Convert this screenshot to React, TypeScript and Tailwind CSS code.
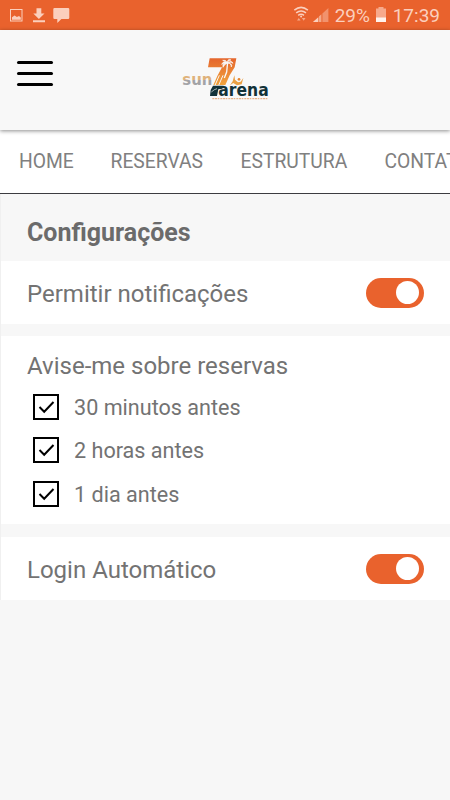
import type { ReactNode } from "react";
import clsx from "clsx";

const TABS = [
  { label: "HOME", className: "w-[91.5px]" },
  { label: "RESERVAS", className: "w-[130px]" },
  { label: "ESTRUTURA", className: "w-[144px]" },
  { label: "CONTATO", className: "w-[110px]" },
];

const REMINDERS = ["30 minutos antes", "2 horas antes", "1 dia antes"];

function StatusBar() {
  return (
    <div className="flex h-[30px] shrink-0 items-center justify-between bg-[#e9622d] pl-[9px] pr-[10px] text-[#fbcfbd]">
      <svg className="h-[30px] w-[62px]" viewBox="9 0 62 30" fill="none">
        <rect x="10.5" y="9.5" width="11.5" height="11.5" stroke="currentColor" strokeWidth="1" />
        <path d="M12 19.700v-2.400l2.600-1.900 2.300 1.600 2.100-1 1.800 1.500v2.200z" fill="currentColor" />
        <path d="M36.500 8.300h4.800v5.200h3.200l-5.600 5.400-5.600-5.400h3.200zM33 20.300h12v1.900H33z" fill="currentColor" />
        <path d="M54.500 8h13.600q1.200 0 1.200 1.200v8.600q0 1.300-1.200 1.300h-6.700L57.300 23v-3.900h-2.800q-1.200 0-1.200-1.300V9.200q0-1.200 1.200-1.200z" fill="currentColor" />
      </svg>
      <div className="flex h-[30px] items-center font-['Roboto',sans-serif] text-[19px]">
        <svg className="h-[30px] w-[42px]" viewBox="293 0 42 30" fill="none">
          <path d="M294.300 10.200q6.800-5.600 13.600 0M296.200 12.900q4.900-3.900 9.800 0M298.200 15.300q2.900-2.200 5.800 0" stroke="currentColor" strokeWidth="1.500" />
          <circle cx="301.100" cy="16.500" r="1" fill="currentColor" />
          <path d="M297 20.500l1.800-2.600 1.800 2.600zM301.900 18.100h3.600l-1.800 2.600z" fill="currentColor" opacity=".65" />
          <path d="M328.400 8v14h-6V13.400z" fill="currentColor" opacity=".45" />
          <path d="M321.400 14.300V22h-2.500v-5.400z" fill="currentColor" opacity=".65" />
          <path d="M318.300 17.200V22h-5.400z" fill="currentColor" />
        </svg>
        <span className="w-[41px] pt-0.5">29%</span>
        <svg className="h-[30px] w-[10px]" viewBox="0 0 10 30">
          <path d="M2.500 7h5v1.600H10V22H0V8.600h2.500z" fill="#f7a98b" />
          <path d="M0 17.500h10V22H0z" fill="#fff3ed" />
        </svg>
        <span className="ml-[7px] pt-0.5">17:39</span>
      </div>
    </div>
  );
}

function Logo() {
  return (
    <svg className="h-[56px] w-[100px]" viewBox="0 0 300 168" role="img" aria-label="Sun7 Arena">
      <defs>
        <linearGradient id="seven" x1="0" y1="0" x2="0" y2="1">
          <stop offset="0" stopColor="#e5662d" />
          <stop offset="1" stopColor="#f1a33c" />
        </linearGradient>
        <linearGradient id="sun" gradientUnits="userSpaceOnUse" x1="0" y1="77" x2="0" y2="106">
          <stop offset=".42" stopColor="#dfb27c" />
          <stop offset=".42" stopColor="#a3a3a6" />
        </linearGradient>
      </defs>
      <text x="22" y="105" textLength="90" lengthAdjust="spacingAndGlyphs" fill="url(#sun)" className="font-['DejaVu_Sans',sans-serif] text-[48px] font-bold">
        sun
      </text>
      <path d="M104 25h80l-5 27-15 24-13 29h-36l12-27 14-26H99z" fill="url(#seven)" />
      <path d="M133 76l-13 30M144 76l-13 30" stroke="#f8f8f8" strokeWidth="3" />
      <path d="M114 107h32l-4 9-12 2-4 20h-21l2-18z" fill="#123238" />
      <path d="M109 126q10-9 17-10" fill="none" stroke="#f8f8f8" strokeWidth="2" />
      <path d="M158 36l-3 30-7 18" fill="none" stroke="#f8f8f8" strokeWidth="4" />
      <path d="M157 39q-10-10-17 4 8-4 17-4-16 0-13 13 4-9 13-13 11-1 12 12 5-11-12-12 12-5 17 1-4-11-17-1 3-10 11-9-10-6-11 9-5-12-14-8 11 1 14 8z" fill="#f8f8f8" stroke="#f8f8f8" strokeWidth="2" />
      <path d="M178 76l2 13 9 8 8-2 8-11-5 19-14 3-11-7-10 7 8-12z" fill="#eaa044" />
      <circle cx="192" cy="88" r="4" fill="#e5862f" />
      <text x="130" y="138" textLength="151" lengthAdjust="spacingAndGlyphs" fill="#123238" className="font-['DejaVu_Sans',sans-serif] text-[53px] font-bold">
        arena
      </text>
      <path d="M112 146h168" stroke="#e5a36f" strokeWidth="4" strokeDasharray="5 2 8 2 4 3" opacity=".8" />
    </svg>
  );
}

function Header() {
  return (
    <header className="z-10 flex h-[100px] shrink-0 items-start bg-[#f8f8f8] pl-[17px] shadow-[0_1px_4px_rgba(0,0,0,0.45)]">
      <button aria-label="Menu" className="mt-[30.500px] flex w-9 flex-col gap-[7.500px]">
        <span className="h-[3.500px] rounded-full bg-black" />
        <span className="h-[3.500px] rounded-full bg-black" />
        <span className="h-[3.500px] rounded-full bg-black" />
      </button>
      <div className="ml-[122px] mt-5">
        <Logo />
      </div>
    </header>
  );
}

function Toggle() {
  return (
    <span role="switch" aria-checked="true" className="flex h-[30px] w-[58px] items-center justify-end rounded-full bg-[#e9622d] pr-[5px]">
      <span className="size-[23px] rounded-full bg-white" />
    </span>
  );
}

function Checkbox({ label }: { label: string }) {
  return (
    <label className="flex h-[43.500px] items-center gap-[15px] text-[21.600px]">
      <span className="flex size-[26px] items-center justify-center border-2 border-black">
        <svg className="h-[14px] w-[17px]" viewBox="0 0 17 14" fill="none">
          <path d="M1.500 7l4.700 4.700L15.500 2" stroke="#000" strokeWidth="2" />
        </svg>
      </span>
      <span className="pt-0.5">{label}</span>
    </label>
  );
}

function Card({ className, children }: { className?: string; children: ReactNode }) {
  return <section className={clsx("bg-white px-[26px]", className)}>{children}</section>;
}

export default function App() {
  return (
    <div className="flex h-[800px] w-[450px] flex-col overflow-hidden bg-[#f7f7f7] font-['Roboto',sans-serif] text-[#737373]">
      <StatusBar />
      <Header />
      <nav className="flex h-16 shrink-0 items-center overflow-hidden border-b border-[#3c3c40] bg-white pl-[19px] pt-px text-[19.300px] text-[#808080]">
        {TABS.map((tab) => (
          <span key={tab.label} className={clsx("shrink-0", tab.className)}>
            {tab.label}
          </span>
        ))}
      </nav>
      <main className="border-l border-[#f0f0f0]">
        <h1 className="flex h-[67px] items-center pl-[26px] pt-[11px] text-[25px] font-bold text-[#6b6b6b]">
          Configurações
        </h1>
        <Card className="flex h-[63px] items-center justify-between text-[24px]">
          <span className="pt-0.5">Permitir notificações</span>
          <Toggle />
        </Card>
        <Card className="mt-3 h-[188px] pt-[14px]">
          <h2 className="flex h-8 items-center text-[24px]">Avise-me sobre reservas</h2>
          <div className="ml-[6px] mt-[3px]">
            {REMINDERS.map((label) => (
              <Checkbox key={label} label={label} />
            ))}
          </div>
        </Card>
        <Card className="mt-[13px] flex h-[63px] items-center justify-between text-[24px]">
          <span className="pt-0.5">Login Automático</span>
          <Toggle />
        </Card>
      </main>
    </div>
  );
}
